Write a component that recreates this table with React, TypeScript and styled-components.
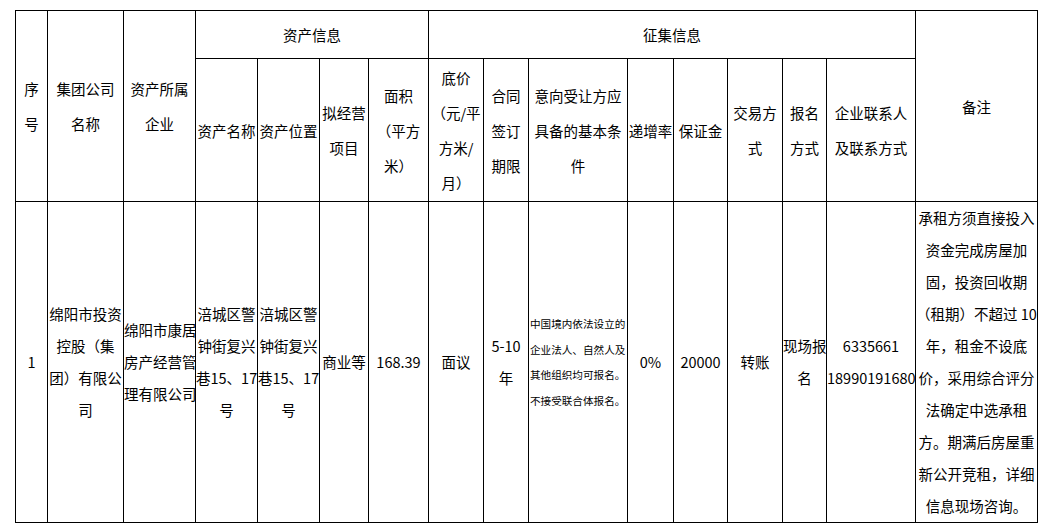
import React from 'react';
import styled, { createGlobalStyle } from 'styled-components';

// 招租信息表：两行表头 + 一行数据，列宽按原表量出来的像素给死

const GlobalStyle = createGlobalStyle`
    html, body {
        margin: 0;
        padding: 0;
        background: #ffffff;
    }
    body {
        font-family: "Noto Sans CJK SC", "Noto Sans", sans-serif;
        color: #000000;
    }
`;

const Page = styled.div`
    padding: 10px 0 0 15px;
`;

const Sheet = styled.table`
    border-collapse: collapse;
    table-layout: fixed;
    width: 1023px;
`;

const Col = styled.col<{ $w: number }>`
    width: ${(props) => props.$w}px;
`;

const Row = styled.tr<{ $h: number }>`
    height: ${(props) => props.$h}px;
`;

const Cell = styled.td`
    border: 1px solid #000000;
    padding: 0;
    text-align: center;
    vertical-align: middle;
    white-space: nowrap;
    overflow: hidden;
    font-size: 14.5px;
    font-weight: 400;
    color: #000000;
`;

const HeadCell = styled(Cell)`
    line-height: 35px;
`;

const BodyCell = styled(Cell)`
    line-height: 32px;
`;

const NoteCell = styled(Cell)`
    text-align: left;
    padding-left: 1px;
    font-size: 10.6px;
    line-height: 25.5px;
`;

const Lines = ({ text }: { text: string[] }) => (
    <>
        {text.map((line, i) => (
            <React.Fragment key={i}>
                {i > 0 && <br />}
                {line}
            </React.Fragment>
        ))}
    </>
);

const widths = [32, 76, 72, 62, 62, 49, 60, 55, 45, 99, 46, 54, 55, 44, 89, 122];

const assetHeads = [
    ['资产名称'],
    ['资产位置'],
    ['拟经营', '项目'],
    ['面积', '（平方', '米）'],
];

const collectHeads = [
    ['底价', '（元/平', '方米/', '月）'],
    ['合同', '签订', '期限'],
    ['意向受让方应', '具备的基本条', '件'],
    ['递增率'],
    ['保证金'],
    ['交易方', '式'],
    ['报名', '方式'],
    ['企业联系人', '及联系方式'],
];

const remark = [
    '承租方须直接投入',
    '资金完成房屋加',
    '固，投资回收期',
    '（租期）不超过 10',
    '年，租金不设底',
    '价，采用综合评分',
    '法确定中选承租',
    '方。期满后房屋重',
    '新公开竞租，详细',
    '信息现场咨询。',
];

const App = () => {
    return (
        <Page>
            <GlobalStyle />
            <Sheet>
                <colgroup>
                    {widths.map((w, i) => <Col key={i} $w={w} />)}
                </colgroup>
                <thead>
                    <Row $h={48}>
                        <HeadCell rowSpan={2}><Lines text={['序', '号']} /></HeadCell>
                        <HeadCell rowSpan={2}><Lines text={['集团公司', '名称']} /></HeadCell>
                        <HeadCell rowSpan={2}><Lines text={['资产所属', '企业']} /></HeadCell>
                        <HeadCell colSpan={4}>资产信息</HeadCell>
                        <HeadCell colSpan={8}>征集信息</HeadCell>
                        <HeadCell rowSpan={2}>备注</HeadCell>
                    </Row>
                    <Row $h={143}>
                        {assetHeads.map((h, i) => <HeadCell key={'a' + i}><Lines text={h} /></HeadCell>)}
                        {collectHeads.map((h, i) => <HeadCell key={'c' + i}><Lines text={h} /></HeadCell>)}
                    </Row>
                </thead>
                <tbody>
                    <Row $h={321}>
                        <BodyCell>1</BodyCell>
                        <BodyCell><Lines text={['绵阳市投资', '控股（集', '团）有限公', '司']} /></BodyCell>
                        <BodyCell><Lines text={['绵阳市康居', '房产经营管', '理有限公司']} /></BodyCell>
                        <BodyCell><Lines text={['涪城区警', '钟街复兴', '巷15、17', '号']} /></BodyCell>
                        <BodyCell><Lines text={['涪城区警', '钟街复兴', '巷15、17', '号']} /></BodyCell>
                        <BodyCell>商业等</BodyCell>
                        <BodyCell>168.39</BodyCell>
                        <BodyCell>面议</BodyCell>
                        <BodyCell><Lines text={['5-10', '年']} /></BodyCell>
                        <NoteCell>
                            <Lines text={['中国境内依法设立的', '企业法人、自然人及', '其他组织均可报名。', '不接受联合体报名。']} />
                        </NoteCell>
                        <BodyCell>0%</BodyCell>
                        <BodyCell>20000</BodyCell>
                        <BodyCell>转账</BodyCell>
                        <BodyCell><Lines text={['现场报', '名']} /></BodyCell>
                        <BodyCell><Lines text={['6335661', '18990191680']} /></BodyCell>
                        <BodyCell><Lines text={remark} /></BodyCell>
                    </Row>
                </tbody>
            </Sheet>
        </Page>
    );
};

export default App;
